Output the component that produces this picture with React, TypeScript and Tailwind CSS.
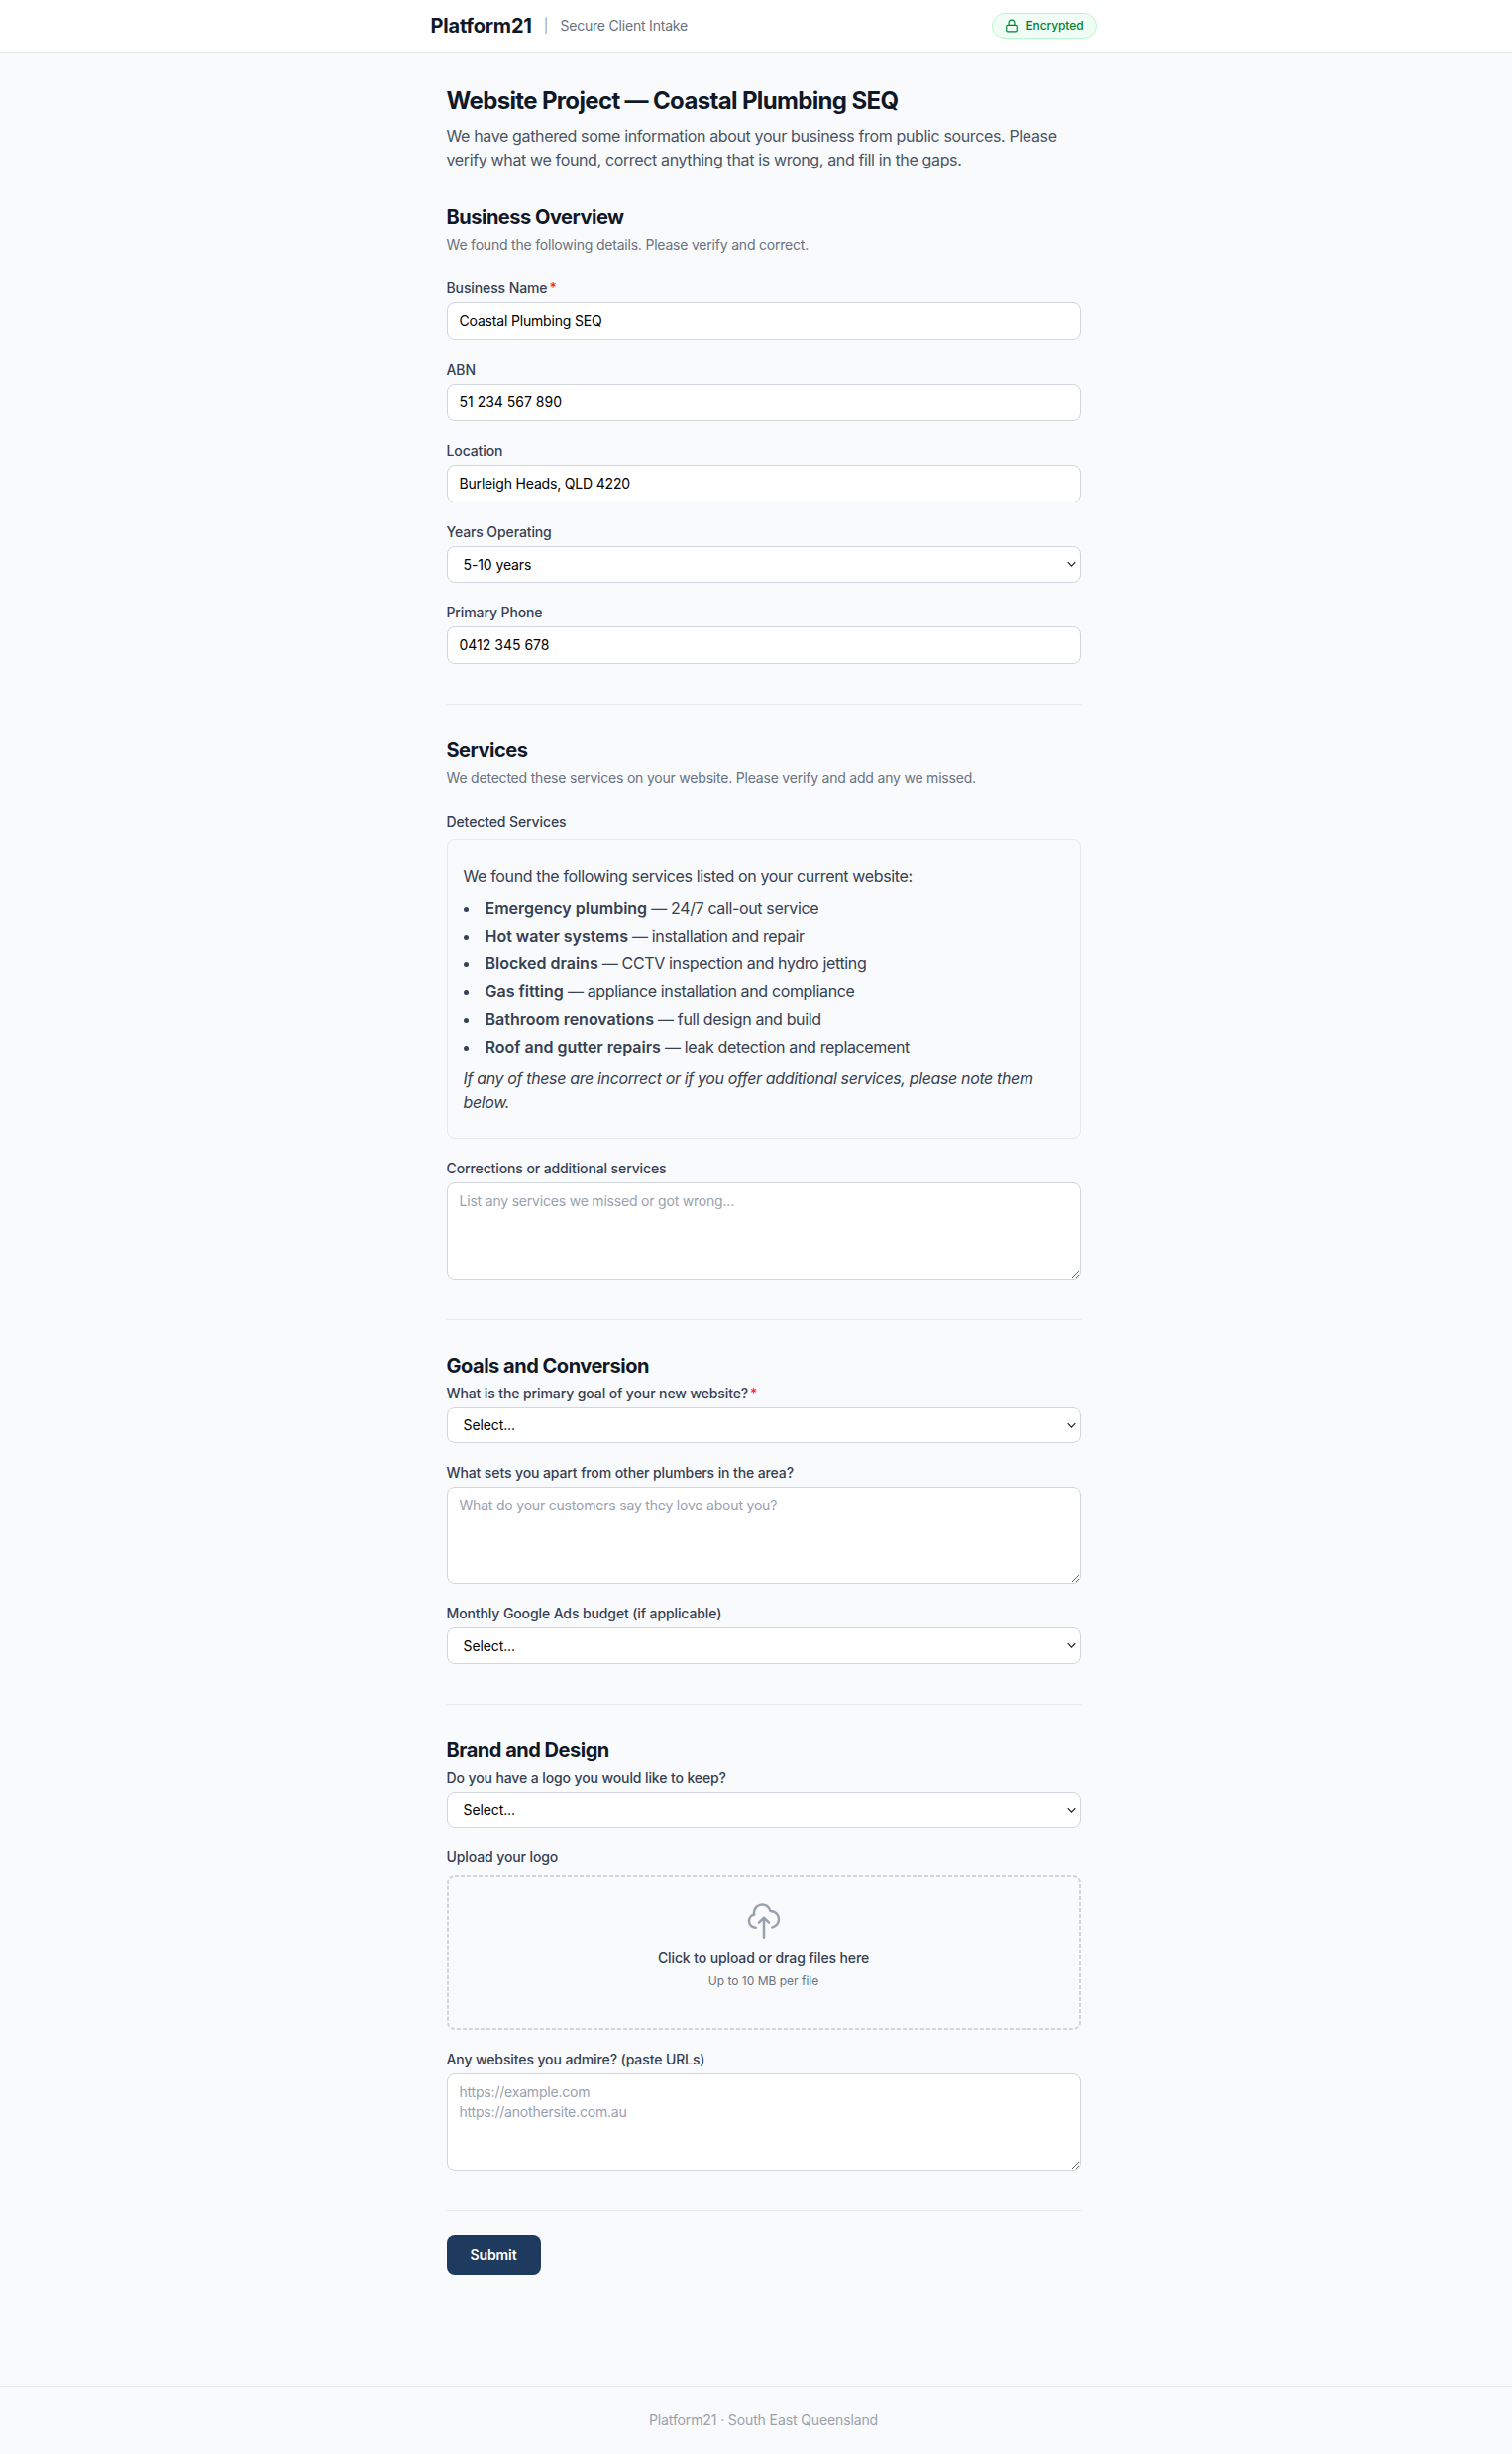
import { Lock } from 'lucide-react';

type FieldProps = {
  label: string;
  required?: boolean;
  children: React.ReactNode;
};

const services = [
  { name: 'Emergency plumbing', detail: '24/7 call-out service' },
  { name: 'Hot water systems', detail: 'installation and repair' },
  { name: 'Blocked drains', detail: 'CCTV inspection and hydro jetting' },
  { name: 'Gas fitting', detail: 'appliance installation and compliance' },
  { name: 'Bathroom renovations', detail: 'full design and build' },
  { name: 'Roof and gutter repairs', detail: 'leak detection and replacement' },
];

function Field({ label, required, children }: FieldProps) {
  return (
    <div>
      <label className="block text-sm font-medium tracking-[-0.11px] text-gray-700">
        {label}
        {required && <span className="ml-0.5 text-red-500">*</span>}
      </label>
      {children}
    </div>
  );
}

function TextInput({ value, numeric }: { value: string; numeric?: boolean }) {
  return (
    <input
      type="text"
      defaultValue={value}
      className={`mt-1 block h-[38px] w-full rounded-lg border border-gray-300 bg-white px-3 pt-[7px] pb-2 text-sm text-black ${
        numeric ? 'tracking-normal' : 'tracking-[-0.18px]'
      }`}
    />
  );
}

function TextArea({ placeholder }: { placeholder: string }) {
  return (
    <textarea
      rows={4}
      placeholder={placeholder}
      className="mt-1 block h-[98px] w-full resize-y rounded-lg border border-gray-300 bg-white px-3 py-2 text-sm tracking-[-0.2px] text-black placeholder:text-gray-400"
    />
  );
}

function Select({ value }: { value: string }) {
  return (
    <div className="relative mt-1">
      <select
        defaultValue={value}
        className="block h-[36.5px] w-full appearance-none rounded-lg border border-gray-300 bg-white px-4 pt-px text-sm tracking-[-0.1px] text-black"
      >
        <option>{value}</option>
      </select>
      <svg
        className="pointer-events-none absolute top-[15px] right-[5px] h-[7px] w-[9px]"
        viewBox="0 0 9 7"
        fill="none"
        stroke="#222"
        strokeWidth="1.2"
      >
        <path d="M0.7 1.2l3.8 3.9 3.8-3.9" />
      </svg>
    </div>
  );
}

function SectionHeading({ title, hint }: { title: string; hint?: string }) {
  return (
    <div className={hint ? 'mb-6' : 'mb-1'}>
      <h2 className="text-xl font-bold tracking-[-0.024em] text-gray-900">{title}</h2>
      {hint && <p className="mt-1 text-sm tracking-[-0.205px] text-gray-500">{hint}</p>}
    </div>
  );
}

function UploadBox() {
  return (
    <div className="relative mt-2 flex h-[156px] flex-col items-center pt-[26px]">
      {/* dashed outline */}
      <svg className="pointer-events-none absolute inset-0 h-[156px] w-[640px]" fill="none">
        <rect
          x="1"
          y="1"
          width="638"
          height="154"
          rx="7"
          className="stroke-gray-300"
          strokeWidth="2"
          strokeDasharray="4 2"
        />
      </svg>
      <svg
        className="size-10 text-gray-400"
        viewBox="0 0 24 24"
        fill="none"
        stroke="currentColor"
        strokeWidth="1.5"
        strokeLinecap="round"
        strokeLinejoin="round"
      >
        <path d="M7 16a4 4 0 01-.88-7.903A5 5 0 1115.9 6L16 6a5 5 0 011 9.9M15 13l-3-3m0 0l-3 3m3-3v12" />
      </svg>
      <p className="mt-2 text-sm font-medium tracking-[-0.12px] text-gray-700">
        Click to upload or drag files here
      </p>
      <p className="mt-[5px] text-xs text-gray-500">Up to 10 MB per file</p>
    </div>
  );
}

export default function App() {
  return (
    <div className="w-full overflow-hidden">
      <div className="min-h-[2476px] w-[1541px] bg-gray-50 font-['Inter',sans-serif] text-gray-900 antialiased">
        <header className="border-b border-gray-200 bg-white">
          <div className="mx-auto flex h-[52px] max-w-2xl items-center justify-between">
            <div className="flex items-center gap-3">
              <span className="text-xl font-bold tracking-[-0.01em] text-gray-900">Platform21</span>
              <span className="text-sm text-gray-400">|</span>
              <span className="text-sm tracking-[-0.2px] text-gray-500">Secure Client Intake</span>
            </div>
            <span className="flex h-[26px] items-center gap-[7px] rounded-full border border-green-200 bg-green-50 px-3 text-xs font-medium tracking-[-0.1px] text-green-700">
              <Lock size={14} />
              Encrypted
            </span>
          </div>
        </header>

        <main className="mx-auto max-w-2xl px-4 pt-[33px]">
          <h1 className="text-2xl font-bold tracking-[-0.027em] text-gray-900">
            Website Project — Coastal Plumbing SEQ
          </h1>
          <p className="mt-[7px] mb-8 text-base tracking-[-0.36px] text-gray-600">
            We have gathered some information about your business from public sources. Please verify
            what we found, correct anything that is wrong, and fill in the gaps.
          </p>

          <form>
            <section className="border-b border-gray-200 pb-10">
              <SectionHeading
                title="Business Overview"
                hint="We found the following details. Please verify and correct."
              />
              <div className="space-y-5">
                <Field label="Business Name" required>
                  <TextInput value="Coastal Plumbing SEQ" />
                </Field>
                <Field label="ABN">
                  <TextInput value="51 234 567 890" numeric />
                </Field>
                <Field label="Location">
                  <TextInput value="Burleigh Heads, QLD 4220" />
                </Field>
                <Field label="Years Operating">
                  <Select value="5-10 years" />
                </Field>
                <Field label="Primary Phone">
                  <TextInput value="0412 345 678" numeric />
                </Field>
              </div>
            </section>

            <section className="border-b border-gray-200 pt-8 pb-10">
              <SectionHeading
                title="Services"
                hint="We detected these services on your website. Please verify and add any we missed."
              />
              <div className="space-y-5">
                <Field label="Detected Services">
                  <div className="mt-2 rounded-lg border border-gray-200 bg-gray-50 px-4 py-6 text-base tracking-[-0.36px] text-gray-700">
                    <p>We found the following services listed on your current website:</p>
                    <ul className="my-2 list-inside list-disc space-y-1">
                      {services.map((service) => (
                        <li key={service.name}>
                          <strong className="font-semibold tracking-normal">{service.name}</strong> —{' '}
                          {service.detail}
                        </li>
                      ))}
                    </ul>
                    <p className="italic">
                      If any of these are incorrect or if you offer additional services, please note
                      them below.
                    </p>
                  </div>
                </Field>
                <Field label="Corrections or additional services">
                  <TextArea placeholder="List any services we missed or got wrong..." />
                </Field>
              </div>
            </section>

            <section className="border-b border-gray-200 pt-8 pb-10">
              <SectionHeading title="Goals and Conversion" />
              <div className="space-y-5">
                <Field label="What is the primary goal of your new website?" required>
                  <Select value="Select..." />
                </Field>
                <Field label="What sets you apart from other plumbers in the area?">
                  <TextArea placeholder="What do your customers say they love about you?" />
                </Field>
                <Field label="Monthly Google Ads budget (if applicable)">
                  <Select value="Select..." />
                </Field>
              </div>
            </section>

            <section className="pt-8 pb-10">
              <SectionHeading title="Brand and Design" />
              <div className="space-y-5">
                <Field label="Do you have a logo you would like to keep?">
                  <Select value="Select..." />
                </Field>
                <Field label="Upload your logo">
                  <UploadBox />
                </Field>
                <Field label="Any websites you admire? (paste URLs)">
                  <TextArea placeholder={'https://example.com\nhttps://anothersite.com.au'} />
                </Field>
              </div>
            </section>

            <div className="border-t border-gray-200 pt-6">
              <button
                type="button"
                className="block h-10 rounded-lg bg-[#1e3a5f] px-6 text-sm font-semibold tracking-[-0.1px] text-white"
              >
                Submit
              </button>
            </div>
          </form>
        </main>

        <footer className="mt-28 border-t border-gray-200 py-6 text-center text-sm tracking-[-0.12px] text-gray-400">
          Platform21 · South East Queensland
        </footer>
      </div>
    </div>
  );
}
